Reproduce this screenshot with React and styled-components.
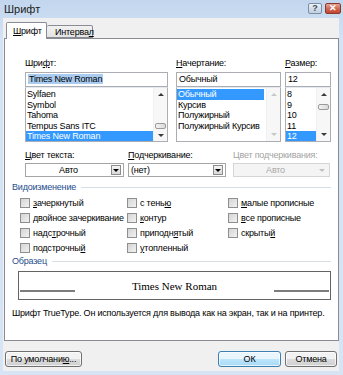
import React from 'react';
import styled, { createGlobalStyle } from 'styled-components';

const GlobalStyle = createGlobalStyle`
  html, body { margin: 0; padding: 0; background: #fff; }
  body { font-family: "Liberation Sans", Arial, sans-serif; }
`;

const Window = styled.div`
  width: 343px;
  height: 375px;
  box-sizing: border-box;
  display: flex;
  flex-direction: column;
  padding: 0 4px 4px 3px;
  background: linear-gradient(#c2d6ee, #d4e3f5 40px, #d6e4f5);
  font-size: 9px;
  letter-spacing: -0.2px;
  color: #000;
  overflow: hidden;
`;

const TitleBar = styled.div`
  height: 18px;
  display: flex;
  align-items: center;
  justify-content: space-between;
  margin-right: -2px;
`;

const Title = styled.span`
  font-size: 11px;
  letter-spacing: 0;
  color: #1b1b1b;
  padding-left: 1px;
`;

const Caption = styled.div`
  display: flex;
  gap: 3px;
  align-self: flex-start;
  margin-top: 3px;
`;

const CaptionButton = styled.div`
  width: ${p => (p.$close ? 16 : 14)}px;
  height: 11px;
  box-sizing: border-box;
  border: 1px solid ${p => (p.$close ? '#8a3b2f' : '#7a8ea6')};
  border-radius: 2px;
  background: ${p =>
    p.$close
      ? 'linear-gradient(#e4a597, #cf6a55 50%, #c2452f)'
      : 'linear-gradient(#eef3f9, #d3deea 50%, #c2d0e0)'};
  color: ${p => (p.$close ? '#fff' : '#3c4a5c')};
  font-size: 9px;
  font-weight: bold;
  line-height: 9px;
  text-align: center;
`;

const Client = styled.div`
  flex: 1;
  display: flex;
  flex-direction: column;
  background: #f0f0f0;
  padding: 4px 0 4px 1px;
`;

const Tabs = styled.div`
  display: flex;
  align-items: flex-end;
  padding-left: 2px;
  height: 16px;
  position: relative;
  z-index: 1;
`;

const Tab = styled.div`
  box-sizing: border-box;
  height: ${p => (p.$active ? 17 : 13)}px;
  width: ${p => p.$w}px;
  margin-bottom: ${p => (p.$active ? -1 : 0)}px;
  border: 1px solid #898c95;
  border-bottom: ${p => (p.$active ? 'none' : '1px solid #898c95')};
  border-left: ${p => (p.$active ? '1px solid #898c95' : 'none')};
  border-radius: 2px 2px 0 0;
  background: ${p => (p.$active ? '#fff' : 'linear-gradient(#f2f2f2, #e3e3e3)')};
  padding: ${p => (p.$active ? '3px 0 0 6px' : '1px 0 0 8px')};
  line-height: 11px;
  white-space: nowrap;
`;

const U = styled.span`
  text-decoration: underline;
`;

const Panel = styled.div`
  flex: 1;
  box-sizing: border-box;
  background: #fff;
  border: 1px solid #898c95;
  display: flex;
  flex-direction: column;
  padding-top: 18px;
`;

const TopRow = styled.div`
  display: flex;
  margin-left: 20px;
`;

const Column = styled.div`
  width: ${p => p.$w}px;
  margin-right: ${p => p.$mr || 0}px;
  display: flex;
  flex-direction: column;
`;

const Label = styled.div`
  height: 12px;
  line-height: 12px;
  color: ${p => (p.$disabled ? '#a3a3a3' : '#000')};
  white-space: nowrap;
`;

const Input = styled.div`
  margin-top: 3px;
  height: 15px;
  box-sizing: border-box;
  border: 1px solid #abadb3;
  padding-left: 2px;
  line-height: 13px;
  white-space: nowrap;
`;

const Selected = styled.span`
  background: #a8cbef;
  padding: 0 1px;
`;

const ListBox = styled.div`
  height: 55px;
  box-sizing: border-box;
  border: 1px solid #abadb3;
  border-top-color: #e3e9ef;
  display: flex;
  overflow: hidden;
`;

const Items = styled.div`
  flex: 1;
  padding-top: 1px;
  min-width: 0;
`;

const Item = styled.div`
  height: 10.5px;
  line-height: 10.5px;
  padding-left: 1px;
  white-space: nowrap;
  background: ${p => (p.$sel ? '#3399ff' : 'transparent')};
  color: ${p => (p.$sel ? '#fff' : '#000')};
  margin-right: ${p => p.$gap || 0}px;
`;

const ScrollBar = styled.div`
  width: 13px;
  display: flex;
  flex-direction: column;
  align-items: center;
  background: #f7f7f7;
  border-left: 1px solid #f0f0f0;
`;

const Arrow = styled.div`
  width: 0;
  height: 0;
  margin: 5px 0;
  border-left: 3px solid transparent;
  border-right: 3px solid transparent;
  ${p => (p.$down ? 'border-top' : 'border-bottom')}: 3px solid ${p => (p.$disabled ? '#c8c8c8' : '#3a3a3a')};
`;

const Track = styled.div`
  flex: 1;
  width: 100%;
  display: flex;
  flex-direction: column;
  align-items: center;
  padding-top: ${p => p.$thumbAt}px;
  box-sizing: border-box;
`;

const Thumb = styled.div`
  width: 11px;
  height: 6px;
  box-sizing: border-box;
  border: 1px solid #9a9a9a;
  border-radius: 2px;
  background: linear-gradient(90deg, #f3f3f3, #dadada);
`;

const FieldRow = styled.div`
  display: flex;
  margin: 7px 0 0 20px;
`;

const Dropdown = styled.div`
  margin-top: 2px;
  height: 14px;
  box-sizing: border-box;
  border: 1px solid ${p => (p.$disabled ? '#d5d5d5' : '#a5a5a5')};
  background: ${p => (p.$disabled ? '#f4f4f4' : '#fff')};
  color: ${p => (p.$disabled ? '#a8a8a8' : '#000')};
  display: flex;
  align-items: center;
`;

const DropText = styled.div`
  flex: 1;
  text-align: ${p => (p.$center ? 'center' : 'left')};
  padding-left: ${p => (p.$center ? 0 : 2)}px;
  line-height: 12px;
`;

const DropButton = styled.div`
  width: 10px;
  height: 10px;
  margin-right: 2px;
  box-sizing: border-box;
  border: 1px solid ${p => (p.$disabled ? 'transparent' : '#8c8c8c')};
  background: ${p => (p.$disabled ? 'transparent' : 'linear-gradient(#f5f5f5, #d8d8d8)')};
  display: flex;
  align-items: center;
  justify-content: center;
`;

const DownTri = styled.div`
  width: 0;
  height: 0;
  border-left: 3px solid transparent;
  border-right: 3px solid transparent;
  border-top: 3px solid ${p => (p.$disabled ? '#c0c0c0' : '#000')};
`;

const GroupTitle = styled.div`
  display: flex;
  align-items: center;
  margin: ${p => p.$mt}px 7px 0 7px;
  height: 12px;
  color: #1e4e8c;
  &::after {
    content: "";
    flex: 1;
    height: 1px;
    margin-left: 5px;
    background: #d5dfe5;
  }
`;

const Effects = styled.div`
  display: grid;
  grid-template-columns: 107px 101px 1fr;
  grid-auto-rows: 15px;
  margin: 2px 0 0 15px;
`;

const Check = styled.div`
  display: flex;
  align-items: center;
  white-space: nowrap;
`;

const Box = styled.div`
  width: 10px;
  height: 10px;
  box-sizing: border-box;
  border: 1px solid #8e8f8f;
  background: linear-gradient(135deg, #d4d4d4, #f2f2f2);
  margin-right: 3px;
`;

const Sample = styled.div`
  margin: 4px 7px 0 13px;
  height: 29px;
  box-sizing: border-box;
  border: 1px solid #646464;
  display: flex;
  align-items: center;
  justify-content: space-between;
  padding: 0 1px;
`;

const SampleLine = styled.div`
  width: 55px;
  height: 2px;
  margin-top: 10px;
  background: #7d7d7d;
`;

const SampleText = styled.div`
  font-family: "Liberation Serif", "Times New Roman", serif;
  font-size: 11px;
  letter-spacing: 0;
`;

const Note = styled.div`
  margin: 7px 0 0 7px;
  line-height: 12px;
  white-space: nowrap;
`;

const Footer = styled.div`
  display: flex;
  align-items: center;
  padding: 10px 2px 0 1px;
  gap: 4px;
`;

const Button = styled.div`
  width: ${p => p.$w}px;
  height: 16px;
  box-sizing: border-box;
  border: 1px solid ${p => (p.$default ? '#3c7fb1' : '#707070')};
  border-radius: 3px;
  background: ${p =>
    p.$default
      ? 'linear-gradient(#eaf6fd 50%, #bee6fd 50%, #a7d9f5)'
      : 'linear-gradient(#f2f2f2 50%, #dddddd 50%, #cfcfcf)'};
  box-shadow: inset 0 0 0 1px rgba(255, 255, 255, 0.7);
  line-height: 14px;
  text-align: center;
  margin-left: ${p => (p.$push ? 'auto' : 0)};
`;

const fonts = ['Sylfaen', 'Symbol', 'Tahoma', 'Tempus Sans ITC', 'Times New Roman'];
const styles = ['Обычный', 'Курсив', 'Полужирный', 'Полужирный Курсив'];
const sizes = ['8', '9', '10', '11', '12'];

const effects = [
  [<><U>з</U>ачеркнутый</>, <>с тень<U>ю</U></>, <><U>м</U>алые прописные</>],
  [<>двойное зачеркивание</>, <><U>к</U>онтур</>, <><U>в</U>се прописные</>],
  [<>надс<U>т</U>рочный</>, <>приподн<U>я</U>тый</>, <>скрыты<U>й</U></>],
  [<>подстрочны<U>й</U></>, <><U>у</U>топленный</>, null],
];

function List({ items, selected, thumbAt, disabled, selGap }) {
  return (
    <ListBox>
      <Items>
        {items.map(t => (
          <Item key={t} $sel={t === selected} $gap={t === selected ? selGap : 0}>
            {t}
          </Item>
        ))}
      </Items>
      <ScrollBar>
        <Arrow $disabled={disabled} />
        <Track $thumbAt={thumbAt}>{!disabled && <Thumb />}</Track>
        <Arrow $down $disabled={disabled} />
      </ScrollBar>
    </ListBox>
  );
}

export default function App() {
  return (
    <>
      <GlobalStyle />
      <Window>
        <TitleBar>
          <Title>Шрифт</Title>
          <Caption>
            <CaptionButton>?</CaptionButton>
            <CaptionButton $close>✕</CaptionButton>
          </Caption>
        </TitleBar>
        <Client>
          <Tabs>
            <Tab $active $w={41}>
              <U>Ш</U>рифт
            </Tab>
            <Tab $w={46}>
              Интерва<U>л</U>
            </Tab>
          </Tabs>
          <Panel>
            <TopRow>
              <Column $w={143} $mr={8}>
                <Label>
                  Шри<U>ф</U>т:
                </Label>
                <Input>
                  <Selected>Times New Roman</Selected>
                </Input>
                <List items={fonts} selected="Times New Roman" thumbAt={22} />
              </Column>
              <Column $w={105} $mr={4}>
                <Label>
                  <U>Н</U>ачертание:
                </Label>
                <Input>Обычный</Input>
                <List items={styles} selected="Обычный" disabled selGap={2} />
              </Column>
              <Column $w={46}>
                <Label>
                  <U>Р</U>азмер:
                </Label>
                <Input>12</Input>
                <List items={sizes} selected="12" thumbAt={3} />
              </Column>
            </TopRow>
            <FieldRow>
              <Column $w={99} $mr={4}>
                <Label>
                  <U>Ц</U>вет текста:
                </Label>
                <Dropdown>
                  <DropText $center>Авто</DropText>
                  <DropButton>
                    <DownTri />
                  </DropButton>
                </Dropdown>
              </Column>
              <Column $w={98} $mr={7}>
                <Label>
                  <U>П</U>одчеркивание:
                </Label>
                <Dropdown>
                  <DropText>(нет)</DropText>
                  <DropButton>
                    <DownTri />
                  </DropButton>
                </Dropdown>
              </Column>
              <Column $w={97}>
                <Label $disabled>Цвет подчеркивания:</Label>
                <Dropdown $disabled>
                  <DropText $center>Авто</DropText>
                  <DropButton $disabled>
                    <DownTri $disabled />
                  </DropButton>
                </Dropdown>
              </Column>
            </FieldRow>
            <GroupTitle $mt={4}>Видоизменение</GroupTitle>
            <Effects>
              {effects.flat().map((e, i) =>
                e ? (
                  <Check key={i}>
                    <Box />
                    {e}
                  </Check>
                ) : (
                  <span key={i} />
                )
              )}
            </Effects>
            <GroupTitle $mt={0}>Образец</GroupTitle>
            <Sample>
              <SampleLine />
              <SampleText>Times New Roman</SampleText>
              <SampleLine />
            </Sample>
            <Note>Шрифт TrueType. Он используется для вывода как на экран, так и на принтер.</Note>
          </Panel>
          <Footer>
            <Button $w={77}>
              По умолчани<U>ю</U>...
            </Button>
            <Button $w={63} $push $default>
              ОК
            </Button>
            <Button $w={52}>Отмена</Button>
          </Footer>
        </Client>
      </Window>
    </>
  );
}
